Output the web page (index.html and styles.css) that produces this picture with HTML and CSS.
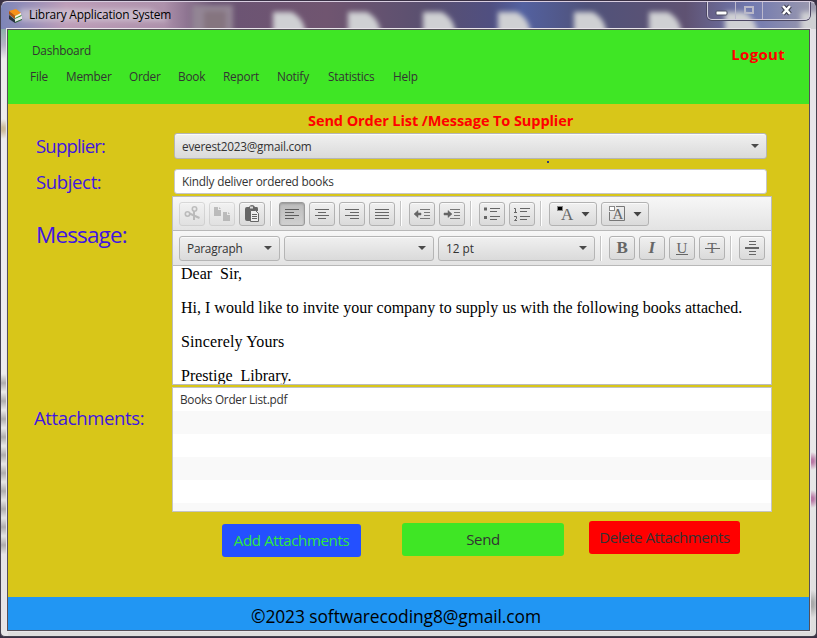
FILE: index.html
```html
<!DOCTYPE html>
<html lang="en">
<head>
<meta charset="utf-8">
<title>Library Application System</title>
<link rel="stylesheet" href="styles.css">
</head>
<body>
<div class="window">
  <header class="titlebar">
    <svg class="glass" width="815" height="27" viewBox="1 2 815 27">
      <defs>
        <filter id="soft"><feGaussianBlur stdDeviation="2.4"/></filter>
        <path id="page" d="M0 12h19q13 7 14 24H0z"/>
      </defs>
      <g filter="url(#soft)" fill="#cfd0d3">
        <path d="M20 9h130l20 12H20z" fill="#d5cdd9" opacity=".65"/>
        <path d="M192 5h41v30h-41z" fill="#938594"/>
        <path d="M204 11h22v22h-22z" fill="#85757f"/>
        <use href="#page" x="273"/><use href="#page" x="348"/><use href="#page" x="423"/><use href="#page" x="498"/>
        <use href="#page" x="574"/><use href="#page" x="649"/><use href="#page" x="725"/><use href="#page" x="801"/>
      </g>
    </svg>
    <svg class="app-icon" width="15" height="15" viewBox="0 0 15 15">
      <path d="M1 7l6 5v3l-6-4z" fill="#26323c"/><path d="M1 6l7-2 6 4-7 3z" fill="#3c9b3f"/>
      <path d="M7 11l7-3v3l-7 3z" fill="#e9eee8"/><path d="M1 3l7-2 5 4-6 3z" fill="#f79018"/>
      <path d="M1 3l6 5v3L1 6z" fill="#b75410"/><path d="M7 8l6-3v2l-6 3z" fill="#fff3dc"/>
      <path d="M7 14l7-3v1l-7 3z" fill="#27642f"/>
    </svg>
    <span class="app-name">Library Application System</span>
    <div class="caption">
      <span class="cap min"><svg width="13" height="6"><rect x="1" y="1" width="11" height="4" rx="1" fill="#fff" stroke="#4c4c60"/></svg></span>
      <span class="cap max"><svg width="12" height="10"><rect x="2" y="2" width="8" height="6" fill="none" stroke="#b9b8c8" stroke-width="2"/></svg></span>
      <span class="cap close"><svg width="13" height="12"><path d="M3 2l7 8M10 2l-7 8" stroke="#3e3e50" stroke-width="4.6"/><path d="M3 2l7 8M10 2l-7 8" stroke="#fff" stroke-width="2.6"/></svg></span>
    </div>
  </header>
  <div class="client">
    <div class="top">
      <div class="dash">Dashboard</div>
      <nav><span class="w1">File</span><span class="w2">Member</span><span class="w3">Order</span><span class="w4">Book</span><span class="w5">Report</span><span class="w6">Notify</span><span class="w7">Statistics</span><span>Help</span></nav>
      <a class="logout">Logout</a>
    </div>
    <main>
      <h1>Send Order List /Message To Supplier</h1>
      <div class="row supplier"><label>Supplier:</label><div class="combo big"><span>everest2023@gmail.com</span><i></i></div></div>
      <div class="row subject"><label>Subject:</label><div class="field">Kindly deliver ordered books</div></div>
      <div class="row message"><label>Message:</label>
        <div class="editor">
          <div class="bar first">
            <b class="btn off"><svg viewBox="0 0 24 22"><g fill="none" stroke="#777" stroke-width="1.6"><circle cx="7.500" cy="11" r="2.200"/><circle cx="14.500" cy="6" r="2.200"/><path d="M9.500 10.500l10 4.500M14 8v9" stroke-width="2"/></g></svg></b>
            <b class="btn off"><svg viewBox="0 0 24 22"><path d="M4 4h4v3h3v6H4zM9 4l2 2H9zM13 9h4v3h3v6h-7zM18 9l2 2h-2z" fill="#777"/></svg></b>
            <b class="btn"><svg viewBox="0 0 24 22"><path d="M5 6q0-2 2-2h2q1-2 3-2t3 2h2q1 0 1 2v2h-8v10H7q-2 0-2-2z" fill="#666"/><rect x="10" y="3.500" width="3" height="2" fill="#ddd"/><path d="M10.500 7.500h5l3 3v8h-8z" fill="#eee" stroke="#666"/><path d="M12 11.500h5M12 13.500h5M12 15.500h5" stroke="#666"/></svg></b>
            <i class="sep"></i>
            <b class="btn on"><svg viewBox="0 0 24 22"><path d="M5 6.500h14M5 9.500h9M5 12.500h14M5 15.500h9" stroke="#5d5d5d"/></svg></b>
            <b class="btn"><svg viewBox="0 0 24 22"><path d="M5 6.500h14M8 9.500h8M5 12.500h14M8 15.500h8" stroke="#666"/></svg></b>
            <b class="btn"><svg viewBox="0 0 24 22"><path d="M5 6.500h14M10 9.500h9M5 12.500h14M10 15.500h9" stroke="#666"/></svg></b>
            <b class="btn"><svg viewBox="0 0 24 22"><path d="M5 6.500h14M5 9.500h14M5 12.500h14M5 15.500h14" stroke="#666"/></svg></b>
            <i class="sep"></i>
            <b class="btn"><svg viewBox="0 0 24 22"><path d="M10 6.500h10M14 9.500h6M14 12.500h6M10 15.500h10" stroke="#777"/><path d="M4 11l4-3.500V10h3v2H8v2.500z" fill="#666" stroke="#666" stroke-width=".5"/></svg></b>
            <b class="btn"><svg viewBox="0 0 24 22"><path d="M10 6.500h10M14 9.500h6M14 12.500h6M10 15.500h10" stroke="#777"/><path d="M12 11L8 7.500V10H4v2h4v2.500z" fill="#666" stroke="#666" stroke-width=".5"/></svg></b>
            <i class="sep"></i>
            <b class="btn"><svg viewBox="0 0 24 22"><path d="M10 5.500h10M10 8.500h7M10 13.500h10M10 16.500h7" stroke="#666"/><path d="M4 6h3M4 14.500h3" stroke="#666" stroke-width="3"/></svg></b>
            <b class="btn"><svg viewBox="0 0 24 22"><path d="M10 5.500h10M10 8.500h7M10 13.500h10M10 16.500h7" stroke="#666"/><path d="M4 5.500h1.500V9M4 9.500h3M4 13.500h2.500v2L4.500 17.500H7" fill="none" stroke="#666"/></svg></b>
            <i class="sep"></i>
            <b class="btn wide"><svg viewBox="0 0 46 22"><rect x="7.500" y="3.500" width="5" height="4" stroke="#888"/><text x="11" y="17" class="glyph">A</text><path d="M31.500 9h8l-4 4.500z" fill="#444"/></svg></b>
            <b class="btn wide"><svg viewBox="0 0 46 22"><path d="M14 3.500h8.500v14h-15V9" fill="none" stroke="#777"/><rect x="7.500" y="3.500" width="5" height="4" fill="#fff" stroke="#888"/><text x="10.500" y="16" class="glyph small">A</text><path d="M31.500 9h8l-4 4.500z" fill="#444"/></svg></b>
          </div>
          <div class="bar">
            <div class="combo para"><span>Paragraph</span><i></i></div>
            <div class="combo family"><span></span><i></i></div>
            <div class="combo size"><span>12 pt</span><i></i></div>
            <i class="sep"></i>
            <b class="btn"><svg viewBox="0 0 24 22"><text x="6.500" y="16" class="glyph bold">B</text></svg></b>
            <b class="btn"><svg viewBox="0 0 24 22"><text x="8.500" y="16" class="glyph italic">I</text></svg></b>
            <b class="btn"><svg viewBox="0 0 24 22"><text x="6.500" y="15.500" class="glyph under">U</text><path d="M6 17.500h12" stroke="#666"/></svg></b>
            <b class="btn"><svg viewBox="0 0 24 22"><text x="7.500" y="16" class="glyph small">T</text><path d="M5 11.500h15" stroke="#666"/></svg></b>
            <i class="sep"></i>
            <b class="btn"><svg viewBox="0 0 24 22"><path d="M9 4.500h7M9 7.500h7M9 14.500h7M9 17.500h7" stroke="#666"/><path d="M5 11h14" stroke="#666" stroke-width="2"/></svg></b>
          </div>
          <div class="body"><p>Dear&nbsp; Sir,</p><p>Hi, I would like to invite your company to supply us with the following books attached.</p><p class="wider">Sincerely Yours</p><p>Prestige&nbsp; Library.</p></div>
        </div>
      </div>
      <div class="row attach"><label>Attachments:</label>
        <ul><li>Books Order List.pdf</li><li></li><li></li><li></li><li></li><li></li></ul>
      </div>
      <div class="actions"><button class="add">Add Attachments</button><button class="send">Send</button><button class="del">Delete Attachments</button></div>
      <i class="dot"></i>
    </main>
    <footer><span>©2023 softwarecoding8@gmail.com</span></footer>
  </div>
</div>
</body>
</html>
```
FILE: styles.css
```css
* { box-sizing: border-box; }
body { margin: 0; width: 817px; height: 638px; overflow: hidden; background: #393044; font: 11.8px/16px "Open Sans", "Noto Sans", sans-serif; letter-spacing: -.2px; color: #333; }
.window {
  height: 636px; margin: 1px 0 0; padding: 0 6px; border: 1px solid #45414e; border-top-color: #d8cde0; border-radius: 7px 7px 5px 5px;
  background:
    radial-gradient(ellipse 7px 9px at 811px 459px, #b979a6 20%, transparent) no-repeat,
    radial-gradient(ellipse 7px 9px at 811px 497px, #b979a6 20%, transparent) no-repeat,
    radial-gradient(ellipse 7px 14px at 811px 602px, #aaa 20%, transparent) no-repeat,
    radial-gradient(ellipse 8px 10px at 2px 127px, #cdbb9d 20%, transparent) no-repeat,
    linear-gradient(#7fae9f, #b9b3c8 60%, transparent) 0 22px / 7px 35px no-repeat,
    linear-gradient(#eeecee, #eeecee) 0 0 / 7px 372px no-repeat,
    linear-gradient(#e6e4e6, #e6e4e6) 0 552px / 7px 84px no-repeat,
    linear-gradient(180deg, transparent, #b0adaf 9px, transparent 18px) 0 372px / 7px 18px repeat-y,
    linear-gradient(#e3e0e5, #f0eff0 50%, #dedddd);
}
.titlebar {
  position: relative; height: 27px; margin: 0 -6px; padding: 0 0 0 7px; display: flex; align-items: flex-start; border-radius: 6px 6px 0 0; overflow: hidden;
  background: linear-gradient(90deg, #7d85b8, #bd9db8 8%, #ad91ab 20%, #6b5474 26%, #705570 40%, #5a5070 52%, #504f80 60%, #5361a0 64%, #50527a 72%, #5f5272 84%, #7179b0 92%, #9d9aae);
}
.glass { position: absolute; left: 0; top: 0; }
.app-icon { margin-top: 6px; position: relative; }
.app-name { position: relative; font-size: 11.9px; line-height: 16px; letter-spacing: -.19px; color: #000; margin: 4px 0 0 6px; white-space: nowrap; }
.caption { position: relative; display: flex; margin-left: auto; margin-right: 6px; height: 18px; width: 103px; border: 1px solid #d4d0df; border-top: 0; border-radius: 0 0 5px 5px; box-shadow: 0 0 0 1px #4d4863; }
.cap { display: flex; align-items: center; justify-content: center; width: 28px; border-right: 1px solid #bbb8cc; }
.cap.max { width: 27px; }
.cap.min svg { margin-top: 4px; }
.cap.max svg, .cap.close svg { margin-top: -2px; }
.cap.close { flex: 1; border: 0; }
.client { width: 803px; height: 602px; border: 1px solid #554f58; display: flex; flex-direction: column; box-shadow: 0 0 0 1px #e8e5ea; position: relative; }
.top { height: 74px; flex: none; background: #3fe625; position: relative; padding: 12px 0 0 22px; }
.dash { padding-left: 2px; }
nav { display: flex; margin-top: 10px; }
.w1 { width: 36px; } .w2 { width: 63px; } .w3 { width: 49px; } .w4 { width: 45px; } .w5 { width: 54px; } .w6 { width: 51px; } .w7 { width: 65px; }
.logout { position: absolute; right: 24px; top: 14px; font-size: 15px; line-height: 20px; letter-spacing: .3px; font-weight: 700; color: #f00; }
main { height: 493px; flex: none; background: #d8c619; position: relative; }
h1 { margin: 0 0 0 300px; height: 29px; padding-top: 7px; font-size: 14.5px; line-height: 20px; font-weight: 700; color: #f00; letter-spacing: -.08px; white-space: nowrap; }
.row { display: flex; }
label { width: 166px; padding-left: 28px; color: #4015e0; font-size: 18.5px; line-height: 26px; letter-spacing: -.35px; flex: none; }
.supplier { height: 36px; }
.supplier label { letter-spacing: -.8px; }
.subject { height: 27px; }
.combo { display: flex; align-items: center; justify-content: space-between; height: 25px; padding: 0 7px; border: 1px solid #b5b5b5; border-radius: 3px; background: linear-gradient(#f0f0f0, #dadada); box-shadow: inset 0 1px #fafafa; }
.combo i { width: 0; height: 0; border: 4px solid transparent; border-top: 4px solid #4a4a4a; border-bottom: 0; }
.big { width: 593px; height: 26px; }
.big span { letter-spacing: -.24px; }
.field { width: 593px; height: 25px; border: 1px solid #c6c6c6; border-radius: 3px; background: #fff; padding: 3px 7px; letter-spacing: -.21px; }
.message label { width: 164px; font-size: 22.5px; line-height: 30px; margin-top: 24px; letter-spacing: -.85px; }
.editor { width: 600px; height: 189px; border: 1px solid #bcbcbc; background: #fff; overflow: hidden; }
.bar { height: 35px; padding: 0 6px; display: flex; align-items: center; gap: 4px; border-bottom: 1px solid #b8b8b8; background: linear-gradient(#f7f7f7, #e3e3e3); }
.first { height: 34px; }
.btn { width: 26px; height: 24px; flex: none; border: 1px solid #b2b2b2; border-radius: 3px; background: linear-gradient(#f0f0f0, #dadada); box-shadow: inset 0 1px #fafafa; }
.btn svg { display: block; width: 24px; height: 22px; }
.wide { width: 48px; }
.wide svg { width: 46px; }
.off { opacity: .42; }
.on { background: linear-gradient(#bcbcbc, #d0d0d0); border-color: #999; box-shadow: inset 0 1px 2px #999; }
.sep { width: 6px; height: 25px; flex: none; background: linear-gradient(90deg, transparent 1px, #c4c4c4 1px 2px, #fff 2px 3px, transparent 3px); }
.para { width: 101px; }
.family { width: 150px; }
.size { width: 157px; letter-spacing: 0; }
.glyph { font: 17px "Liberation Serif", serif; letter-spacing: 0; fill: #666; }
.small, .under { font-size: 15px; }
.bold { font-weight: 700; }
.italic { font-style: italic; font-weight: 700; }
.body { padding: 0 8px; font: 16px/18px "Liberation Serif", serif; letter-spacing: 0; color: #000; }
.body p { margin: 0 0 16px; white-space: nowrap; }
.body p:first-child { margin-top: -1px; }
.body .wider { letter-spacing: .14px; }
.attach { height: 136px; padding-top: 2px; }
.attach label { width: 164px; padding-left: 26px; margin-top: 18px; }
ul { width: 600px; height: 125px; margin: 0; padding: 0; list-style: none; background: #fff; border: 1px solid #c4c4c4; overflow: hidden; }
li { height: 23px; padding: 3px 7px; letter-spacing: -.29px; }
li:nth-child(even) { background: #f9f9f9; }
.actions { display: flex; align-items: flex-start; padding-left: 214px; }
button { height: 33px; padding: 0; border: 0; border-radius: 3px; font: 15px/33px "Open Sans", sans-serif; letter-spacing: -.35px; color: #333; white-space: nowrap; }
.add { width: 139px; margin: 3px 41px 0 0; background: #2450ff; color: #30e83d; }
.send { width: 162px; margin: 2px 25px 0 0; background: #3fe625; }
.del { width: 151px; background: #f00; letter-spacing: -.42px; }
.dot { position: absolute; left: 539px; top: 57px; width: 2px; height: 2px; background: #333c78; }
footer { height: 33px; flex: none; background: #2196f3; color: #000; font-size: 17.4px; line-height: 39px; padding-left: 243px; overflow: hidden; white-space: nowrap; letter-spacing: -.08px; }
```
